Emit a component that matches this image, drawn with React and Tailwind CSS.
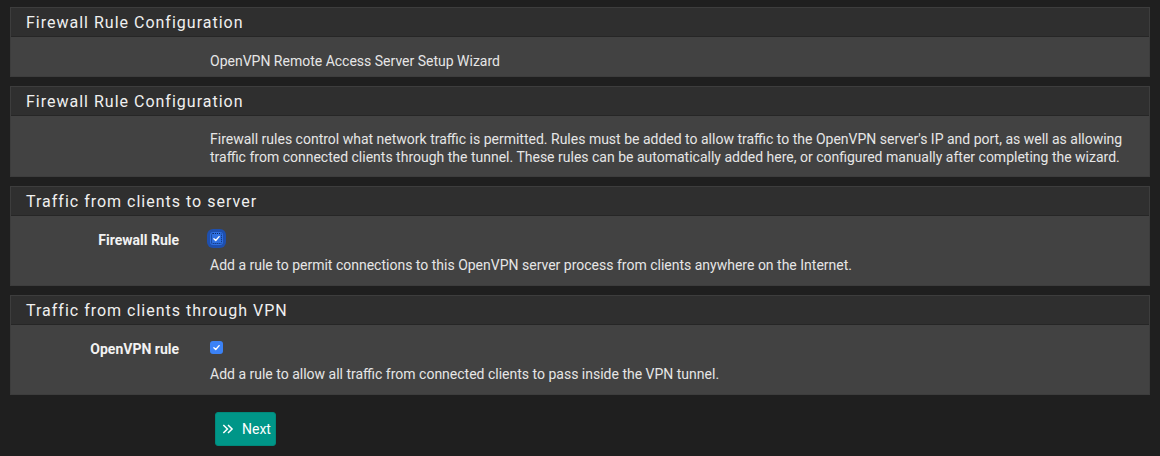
import React from "react";

function Panel({ title, children }) {
  return (
    <section className="border border-[#3d3d3d] bg-[#424242]">
      <div className="flex h-[29px] items-center border-b border-[#262626] bg-[#2f2f2f] px-[15px] pt-[1px] text-[16px] tracking-[1px] text-[#f0f0f0]">
        {title}
      </div>
      <div>{children}</div>
    </section>
  );
}

function CheckRow({ label, description, focused }) {
  return (
    <div className="flex pt-[13px] pb-[10px]">
      <div className="w-[168px] shrink-0 pt-[1px] text-right text-[14px] font-bold text-[#f2f2f2]">
        {label}
      </div>
      <div className="ml-[31px]">
        <div className="flex h-[18px] items-center">
          <span
            className={
              focused
                ? "flex h-[13px] w-[13px] items-center justify-center rounded-[3px] bg-[#2f6fe0] ring-[3px] ring-[#1e4fae] outline outline-1 outline-dotted outline-[#0b2a66] -outline-offset-2"
                : "flex h-[13px] w-[13px] items-center justify-center rounded-[3px] bg-[#3b82f6]"
            }
          >
            <svg viewBox="0 0 12 12" className="h-[9px] w-[9px]">
              <path d="M2.5 6.3 L5 8.7 L9.5 3.5" fill="none" stroke="#fff" strokeWidth="1.8" strokeLinecap="round" strokeLinejoin="round" />
            </svg>
          </span>
        </div>
        <p className="mt-[8px] text-[14px] leading-[20px] text-[#e6e6e6]">{description}</p>
      </div>
    </div>
  );
}

export default function App() {
  return (
    <div className="min-h-[456px] bg-[#1f1f1f] px-[10px] pt-[7px] font-['Roboto',sans-serif]">
      <div className="flex w-[1140px] flex-col gap-[9px]">
        <Panel title="Firewall Rule Configuration">
          <div className="h-[39px] pl-[199px] pt-[15px] text-[14px] leading-[18px] text-[#e6e6e6]">
            OpenVPN Remote Access Server Setup Wizard
          </div>
        </Panel>

        <Panel title="Firewall Rule Configuration">
          <div className="h-[60px] pl-[199px] pr-[20px] pt-[14px] text-[14px] leading-[18px] text-[#e6e6e6]">
            Firewall rules control what network traffic is permitted. Rules must be added to allow traffic to the OpenVPN server's IP and port, as well as allowing traffic from connected clients through the tunnel. These rules can be automatically added here, or configured manually after completing the wizard.
          </div>
        </Panel>

        <Panel title="Traffic from clients to server">
          <CheckRow
            label="Firewall Rule"
            focused
            description="Add a rule to permit connections to this OpenVPN server process from clients anywhere on the Internet."
          />
        </Panel>

        <Panel title="Traffic from clients through VPN">
          <CheckRow
            label="OpenVPN rule"
            description="Add a rule to allow all traffic from connected clients to pass inside the VPN tunnel."
          />
        </Panel>
      </div>

      <div className="pl-[205px] pt-[17px]">
        <button
          type="button"
          className="flex h-[34px] w-[61px] items-center gap-[7px] rounded-[3px] border border-[#00897b] bg-[#009688] pl-[5px] text-[14px] text-white"
        >
          <svg viewBox="0 0 12 12" className="h-[14px] w-[14px]">
            <path d="M2 2.5 L5.5 6 L2 9.5 M6 2.5 L9.5 6 L6 9.5" fill="none" stroke="#fff" strokeWidth="1.3" />
          </svg>
          Next
        </button>
      </div>
    </div>
  );
}
